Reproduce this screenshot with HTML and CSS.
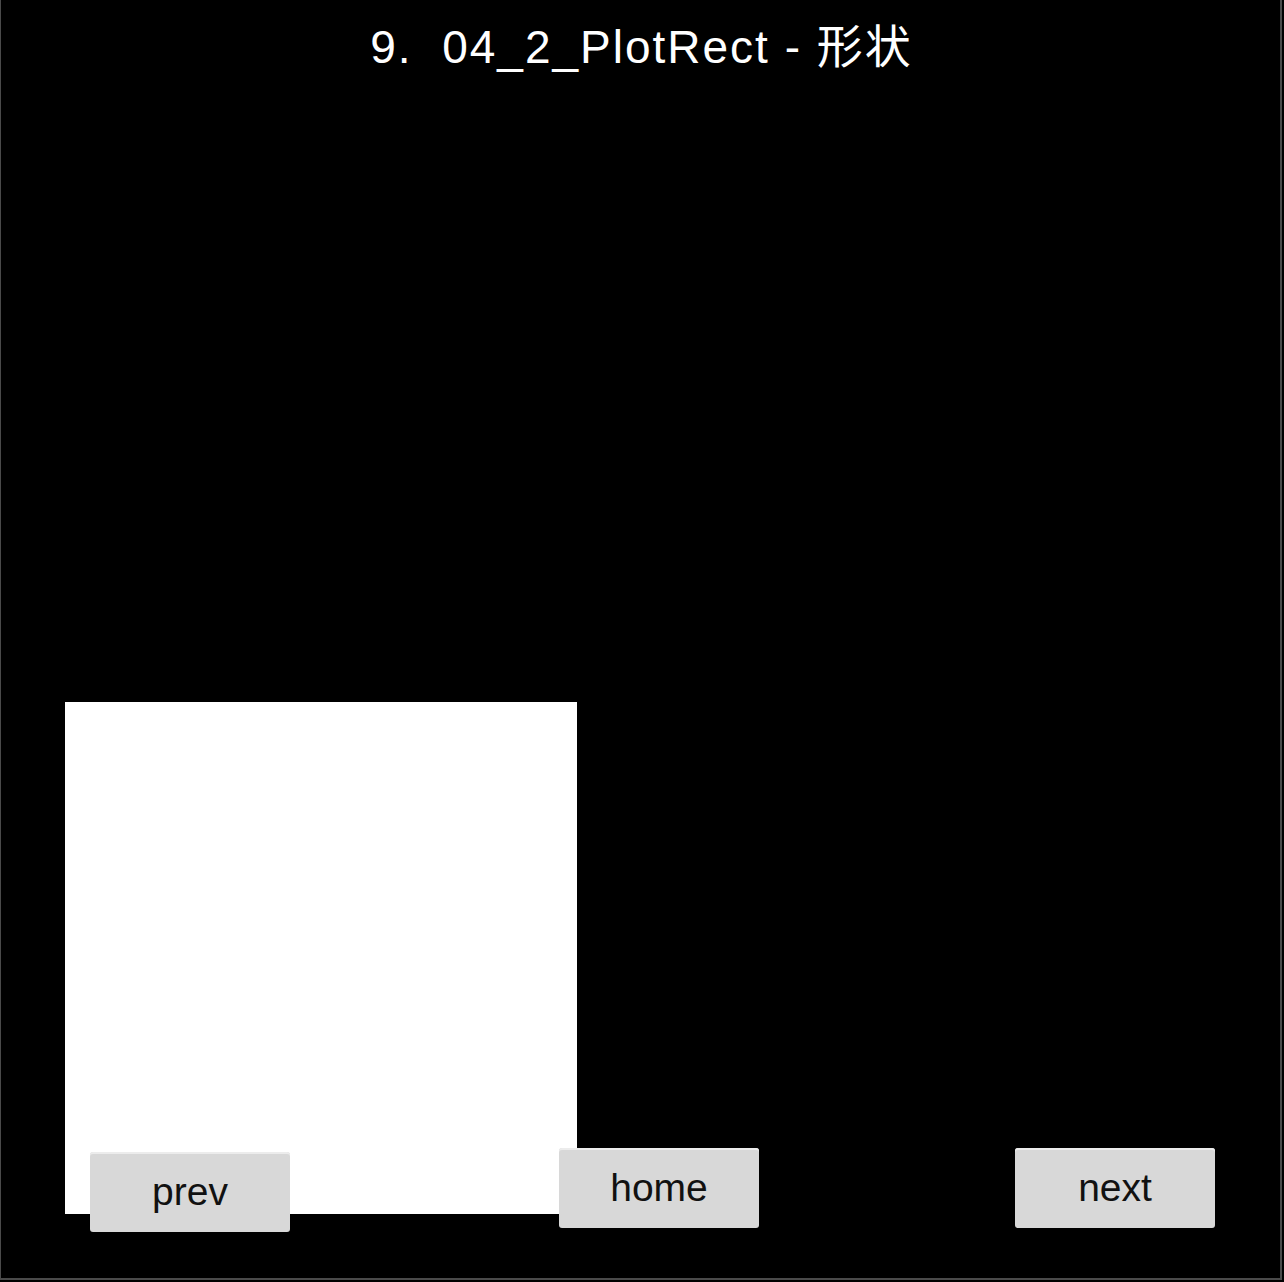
FILE: index.html
```html
<!DOCTYPE html>
<html>
<head>
<meta charset="utf-8">
<title>04_2_PlotRect</title>
<link rel="stylesheet" href="styles.css">
</head>
<body>
<div class="frame">
  <h1 class="title">9.&nbsp; 04_2_PlotRect - 形状</h1>
  <div class="shape"></div>
  <button class="btn btn-prev">prev</button>
  <button class="btn btn-home">home</button>
  <button class="btn btn-next">next</button>
</div>
</body>
</html>
```
FILE: styles.css
```css
html, body {
  margin: 0;
  padding: 0;
  background: #000;
}
.frame {
  position: relative;
  box-sizing: border-box;
  width: 1282px;
  height: 1280px;
  background: #000;
  border-left: 1px solid #4a4a4a;
  border-right: 2px solid #4a4a4a;
  border-bottom: 2px solid #4a4a4a;
}
.title {
  margin: 0;
  padding-top: 24px;
  padding-left: 2px;
  text-align: center;
  color: #fff;
  font-family: "Liberation Sans", Arial, "Noto Sans CJK SC", sans-serif;
  font-weight: normal;
  font-size: 46px;
  line-height: 46px;
  letter-spacing: 2px;
}
.shape {
  position: absolute;
  left: 64px;
  top: 702px;
  width: 512px;
  height: 512px;
  background: #fff;
}
.btn {
  position: absolute;
  width: 200px;
  height: 80px;
  margin: 0;
  padding: 0;
  border: none;
  border-radius: 3px;
  background: #d8d8d8;
  box-shadow: inset 0 2px 0 #ececec;
  color: #111;
  font-family: "Liberation Sans", Arial, sans-serif;
  font-size: 39px;
  line-height: 80px;
  text-align: center;
}
.btn-prev { left: 89px; top: 1152px; }
.btn-home { left: 558px; top: 1148px; }
.btn-next { left: 1014px; top: 1148px; }
```
